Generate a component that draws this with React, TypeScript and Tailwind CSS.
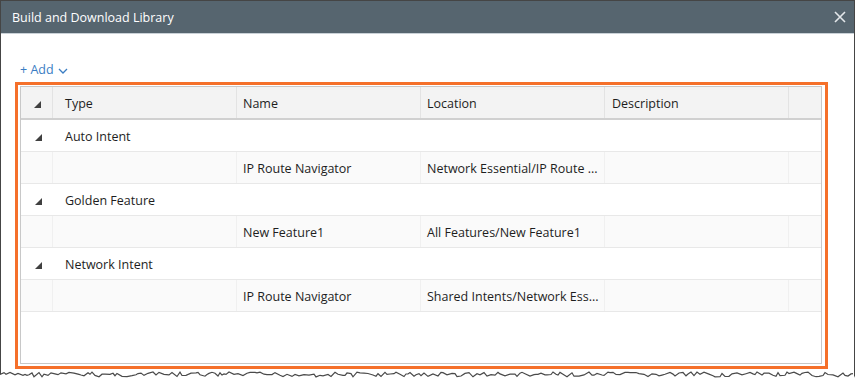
import React from "react";

const groups = [
  { type: "Auto Intent", name: "IP Route Navigator", location: "Network Essential/IP Route ..." },
  { type: "Golden Feature", name: "New Feature1", location: "All Features/New Feature1" },
  { type: "Network Intent", name: "IP Route Navigator", location: "Shared Intents/Network Ess..." },
];

function Tri() {
  return (
    <svg width="7" height="7" viewBox="0 0 7 7" className="block">
      <polygon points="7,0 7,7 0,7" fill="#404040" />
    </svg>
  );
}

function tornPath() {
  let seed = 7;
  const rnd = () => {
    seed = (seed * 9301 + 49297) % 233280;
    return seed / 233280;
  };
  const pts: string[] = [];
  let x = 0;
  while (x <= 856) {
    const y = 372 + rnd() * 5;
    pts.push(`${x},${y.toFixed(1)}`);
    x += 2 + Math.floor(rnd() * 4);
  }
  return pts;
}

export default function App() {
  const pts = tornPath();
  const line = "M" + pts.join(" L");
  const fill = line + " L856,380 L0,380 Z";
  const cell = "border-r border-[#e3e3e3] h-full flex items-center whitespace-nowrap pt-[3px]";
  const rowCell = "border-r border-[#f0f0f0] h-full flex items-center whitespace-nowrap overflow-hidden pt-[3px]";
  return (
    <div className="relative w-[855px] h-[380px] bg-white overflow-hidden font-['Open_Sans',sans-serif] text-[12.5px] text-[#1e1e1e]">
      <div className="h-[378px] border-x border-t border-[#454545] flex flex-col">
        <div className="h-[33px] shrink-0 bg-[#56656f] border-b border-[#c9d1d7] flex items-center justify-between pl-[11px] pr-[7px]">
          <span className="text-white text-[12.5px] pt-[2px]">Build and Download Library</span>
          <svg width="12" height="12" viewBox="0 0 12 12" className="mr-[1px]">
            <path d="M1 1 L11 11 M11 1 L1 11" stroke="#e3e7ea" strokeWidth="1.6" />
          </svg>
        </div>
        <div className="pt-[26px] pl-[19px] flex items-center gap-[4px] text-[#3a7dc3] h-[47px] whitespace-nowrap">
          <span>+ Add</span>
          <svg width="10" height="7" viewBox="0 0 10 7" className="mt-[1px]">
            <path d="M1 1 L5 5 L9 1" stroke="#3a7dc3" strokeWidth="1.3" fill="none" />
          </svg>
        </div>
        <div className="ml-[14px] mt-[1px] w-[813px] h-[287px] border-[3px] border-[#f5702a] pl-[2px] pr-[3px] pt-[1px] pb-[2px]">
          <div className="h-full border border-[#c8c8c8] flex flex-col">
            <div className="h-[33px] shrink-0 bg-[#f3f3f3] border-b-2 border-[#d0d0d0] grid grid-cols-[32px_184px_184px_184px_184px_1fr]">
              <div className="border-r border-[#e3e3e3] h-full flex items-center justify-center pl-[2px] pt-[3px]">
                <Tri />
              </div>
              <div className={cell + " pl-[12px]"}>Type</div>
              <div className={cell + " pl-[6px]"}>Name</div>
              <div className={cell + " pl-[6px]"}>Location</div>
              <div className={cell + " pl-[7px]"}>Description</div>
              <div className="h-full" />
            </div>
            {groups.map((g) => (
              <React.Fragment key={g.type}>
                <div className="h-[32px] shrink-0 border-b border-[#e8e8e8] bg-white grid grid-cols-[32px_184px_184px_184px_184px_1fr]">
                  <div className="h-full flex items-center justify-center pl-[2px] pt-[3px]">
                    <Tri />
                  </div>
                  <div className="h-full flex items-center pl-[12px] pt-[3px] whitespace-nowrap">{g.type}</div>
                  <div />
                  <div />
                  <div />
                  <div />
                </div>
                <div className="h-[32px] shrink-0 border-b border-[#e8e8e8] bg-[#fafafa] grid grid-cols-[32px_184px_184px_184px_184px_1fr]">
                  <div className={rowCell} />
                  <div className={rowCell} />
                  <div className={rowCell + " pl-[6px]"}>{g.name}</div>
                  <div className={rowCell + " pl-[6px]"}>{g.location}</div>
                  <div className={rowCell} />
                  <div />
                </div>
              </React.Fragment>
            ))}
          </div>
        </div>
      </div>
      <svg className="absolute left-0 top-0" width="855" height="380" viewBox="0 0 855 380">
        <path d={fill} fill="#ffffff" />
        <path d={line} stroke="#4a4a4a" strokeWidth="1.2" fill="none" />
      </svg>
    </div>
  );
}
